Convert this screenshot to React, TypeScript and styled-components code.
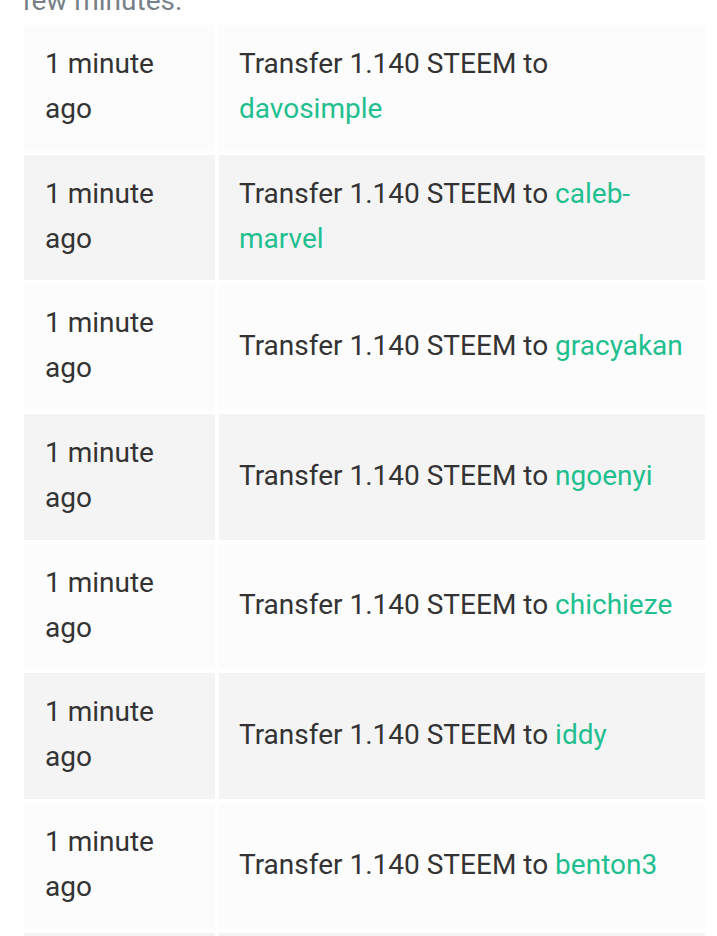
import React from "react";
import styled, { createGlobalStyle } from "styled-components";

const GlobalStyle = createGlobalStyle`
  html, body {
    margin: 0;
    padding: 0;
    background: #ffffff;
  }
  body {
    font-family: Roboto, "Liberation Sans", Arial, sans-serif;
    -webkit-font-smoothing: antialiased;
  }
`;

const Page = styled.div`
  padding: 0 20px;
  overflow: hidden;
`;

const Intro = styled.p`
  margin: -22.5px 0 -1.5px 2px;
  font-size: 28px;
  line-height: 45px;
  color: #788187;
`;

const Table = styled.table`
  width: 689px;
  border-collapse: separate;
  border-spacing: 4px;
  table-layout: fixed;
  font-size: 28px;
  line-height: 45px;
  color: #333333;
`;

const Row = styled.tr<{ $striped: boolean }>`
  background: ${(p) => (p.$striped ? "#f4f4f4" : "#fcfcfc")};
`;

const TimeCell = styled.td`
  width: 191px;
  box-sizing: border-box;
  padding: 16px 20px 19.7px 21px;
  vertical-align: middle;
`;

const InfoCell = styled.td`
  padding: 16px 20px 19.7px 20px;
  vertical-align: middle;
`;

const Account = styled.a`
  color: #1fbf8f;
  text-decoration: none;
`;

const recipients = [
  "davosimple",
  "caleb-marvel",
  "gracyakan",
  "ngoenyi",
  "chichieze",
  "iddy",
  "benton3",
  "steemitph",
];

const App = () => {
  return (
    <Page>
      <GlobalStyle />
      <Intro>few minutes.</Intro>
      <Table>
        <tbody>
          {recipients.map((name, i) => (
            <Row key={name} $striped={i % 2 === 1}>
              <TimeCell>1 minute ago</TimeCell>
              <InfoCell>
                Transfer 1.140 STEEM to <Account href="#">{name}</Account>
              </InfoCell>
            </Row>
          ))}
        </tbody>
      </Table>
    </Page>
  );
};

export default App;
